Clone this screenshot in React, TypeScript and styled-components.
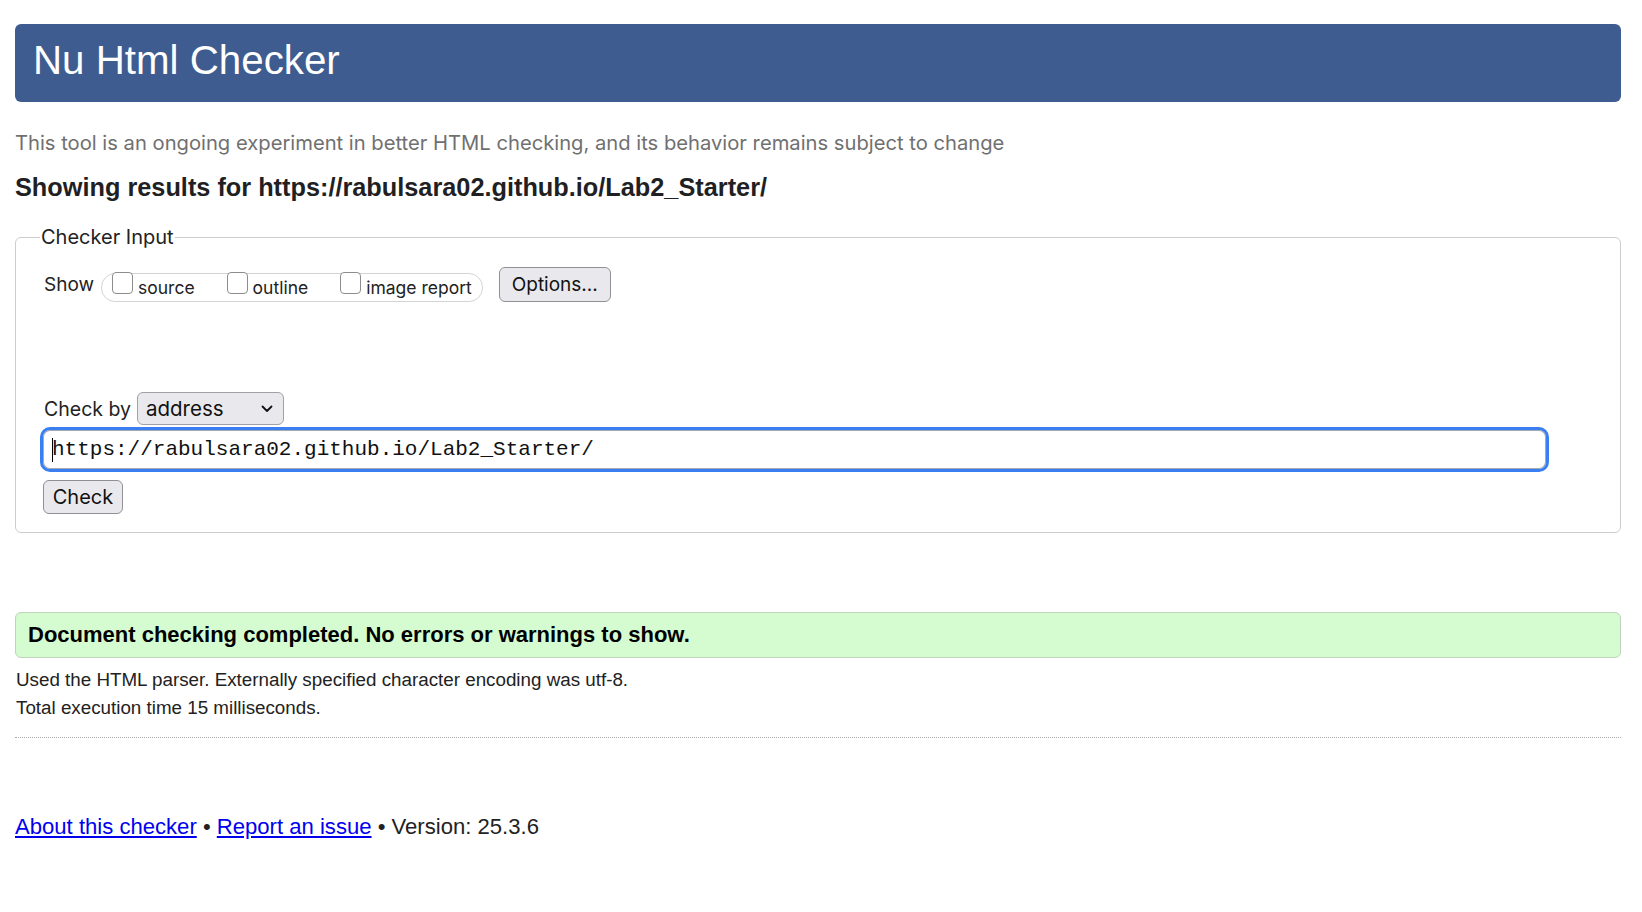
import React from "react";
import styled, { createGlobalStyle } from "styled-components";

const GlobalStyle = createGlobalStyle`
  html, body { margin: 0; padding: 0; background: #ffffff; }
  body { font-family: "Liberation Sans", Arial, sans-serif; color: #222; }
`;

const Page = styled.div`
  padding: 24px 21px 60px 15px;
`;

const Header = styled.header`
  background: #3e5c90;
  border-radius: 6px;
  height: 78px;
  padding-left: 18px;
  display: flex;
  align-items: center;
`;

const Title = styled.h1`
  margin: 0 0 4px 0;
  font-weight: normal;
  font-size: 40.3px;
  line-height: 60px;
  color: #ffffff;
`;

const Subtitle = styled.p`
  margin: 29px 0 0 0;
  font-family: Inter, "Liberation Sans", sans-serif;
  font-size: 20.2px;
  line-height: 23px;
  color: #707070;
`;

const ResultsFor = styled.h2`
  margin: 20px 0 0 0;
  font-size: 25.3px;
  line-height: 26px;
  font-weight: bold;
  color: #1f1f24;
`;

const Fieldset = styled.fieldset`
  margin: 26px 0 0 0;
  border: 1px solid #cdcdcd;
  border-radius: 6px;
  padding: 0 24px 18px 24px;
  min-width: 0;
`;

const Legend = styled.legend`
  padding: 0 1px;
  font-family: Inter, "Liberation Sans", sans-serif;
  font-size: 20px;
  line-height: 22px;
  color: #222;
`;

const ShowRow = styled.div`
  display: flex;
  align-items: center;
  margin: 19px 0 0 4px;
  height: 35px;
`;

const ShowLabel = styled.span`
  font-family: Inter, "Liberation Sans", sans-serif;
  font-size: 19px;
  color: #222;
  margin-right: 7px;
`;

const Pill = styled.div`
  display: flex;
  align-items: center;
  gap: 32px;
  height: 27px;
  margin-top: 5px;
  padding: 0 10px;
  border: 1px solid #d4d4d4;
  border-radius: 14px;
`;

const CheckItem = styled.label`
  display: inline-flex;
  align-items: center;
  gap: 5px;
  font-family: Inter, "Liberation Sans", sans-serif;
  font-size: 17.5px;
  color: #222;
`;

const Box = styled.span`
  display: inline-block;
  width: 19px;
  height: 20px;
  border: 1px solid #8d8d8d;
  border-radius: 4px;
  background: #fff;
  margin-bottom: 8px;
`;

const GrayButton = styled.button<{ $w: number; $h: number; $size: number }>`
  width: ${(p) => p.$w}px;
  height: ${(p) => p.$h}px;
  padding: 0;
  background: #e9e9ed;
  border: 1px solid #8f8f96;
  border-radius: 6px;
  font-family: Inter, "Liberation Sans", sans-serif;
  font-size: ${(p) => p.$size}px;
  color: #111;
`;

const OptionsButton = styled(GrayButton)`
  margin-left: 16px;
`;

const CheckByRow = styled.div`
  display: flex;
  align-items: center;
  margin: 90px 0 0 4px;
  height: 33px;
`;

const CheckByLabel = styled.span`
  font-family: Inter, "Liberation Sans", sans-serif;
  font-size: 19.5px;
  color: #222;
  margin-right: 6px;
`;

const Select = styled.div`
  width: 147px;
  height: 33px;
  box-sizing: border-box;
  display: flex;
  align-items: center;
  justify-content: space-between;
  padding: 0 10px 0 8px;
  background: #e9e9ed;
  border: 1px solid #a0a0a6;
  border-radius: 6px;
  font-family: Inter, "Liberation Sans", sans-serif;
  font-size: 20.5px;
  color: #111;
`;

const InputWrap = styled.div`
  position: relative;
  margin-top: 2px;
  width: 1509px;
`;

const UrlInput = styled.input`
  box-sizing: border-box;
  width: 100%;
  height: 45px;
  border: 3px solid #3a7ff2;
  border-radius: 10px;
  box-shadow: inset 0 0 0 1px #a8a8b0;
  padding: 0 9px;
  font-family: "Liberation Mono", "DejaVu Sans Mono", monospace;
  font-size: 21px;
  color: #111;
  background: #fff;
  outline: none;
`;

const Caret = styled.span`
  position: absolute;
  left: 12px;
  top: 11px;
  width: 1px;
  height: 24px;
  background: #000;
`;

const CheckButton = styled(GrayButton)`
  display: block;
  margin: 8px 0 0 3px;
`;

const Success = styled.div`
  margin-top: 79px;
  height: 46px;
  box-sizing: border-box;
  display: flex;
  align-items: center;
  padding-left: 12px;
  background: #d5fcd0;
  border: 1px solid #bfd3bd;
  border-radius: 6px;
  font-size: 22px;
  font-weight: bold;
  color: #000;
`;

const Note = styled.p<{ $first?: boolean }>`
  margin: ${(p) => (p.$first ? "11px" : "5px")} 0 0 1px;
  font-size: 18.8px;
  line-height: 22.5px;
  color: #222;
`;

const Rule = styled.hr`
  margin: 18px 0 0 0;
  border: none;
  border-top: 1px dotted #a9a9a9;
  height: 0;
`;

const Footer = styled.p`
  margin: 76px 0 0 0;
  font-size: 22.1px;
  line-height: 26px;
  color: #222;
`;

const Link = styled.a`
  color: #0000ee;
  text-decoration: underline;
`;

function Chevron() {
  return (
    <svg width="12" height="8" viewBox="0 0 12 8" aria-hidden="true">
      <path d="M1.5 1.5 L6 6 L10.5 1.5" fill="none" stroke="#111" strokeWidth="1.8" strokeLinecap="round" strokeLinejoin="round" />
    </svg>
  );
}

export default function App() {
  return (
    <>
      <GlobalStyle />
      <Page>
        <Header>
          <Title>Nu Html Checker</Title>
        </Header>
        <Subtitle>
          This tool is an ongoing experiment in better HTML checking, and its behavior remains subject to change
        </Subtitle>
        <ResultsFor>Showing results for https://rabulsara02.github.io/Lab2_Starter/</ResultsFor>
        <Fieldset>
          <Legend>Checker Input</Legend>
          <ShowRow>
            <ShowLabel>Show</ShowLabel>
            <Pill>
              <CheckItem>
                <Box />
                source
              </CheckItem>
              <CheckItem>
                <Box />
                outline
              </CheckItem>
              <CheckItem>
                <Box />
                image report
              </CheckItem>
            </Pill>
            <OptionsButton $w={112} $h={35} $size={19}>Options...</OptionsButton>
          </ShowRow>
          <CheckByRow>
            <CheckByLabel>Check by</CheckByLabel>
            <Select>
              <span>address</span>
              <Chevron />
            </Select>
          </CheckByRow>
          <InputWrap>
            <UrlInput readOnly value="https://rabulsara02.github.io/Lab2_Starter/" />
            <Caret />
          </InputWrap>
          <CheckButton $w={80} $h={34} $size={20}>Check</CheckButton>
        </Fieldset>
        <Success>Document checking completed. No errors or warnings to show.</Success>
        <Note $first>Used the HTML parser. Externally specified character encoding was utf-8.</Note>
        <Note>Total execution time 15 milliseconds.</Note>
        <Rule />
        <Footer>
          <Link href="#">About this checker</Link> • <Link href="#">Report an issue</Link> • Version: 25.3.6
        </Footer>
      </Page>
    </>
  );
}
